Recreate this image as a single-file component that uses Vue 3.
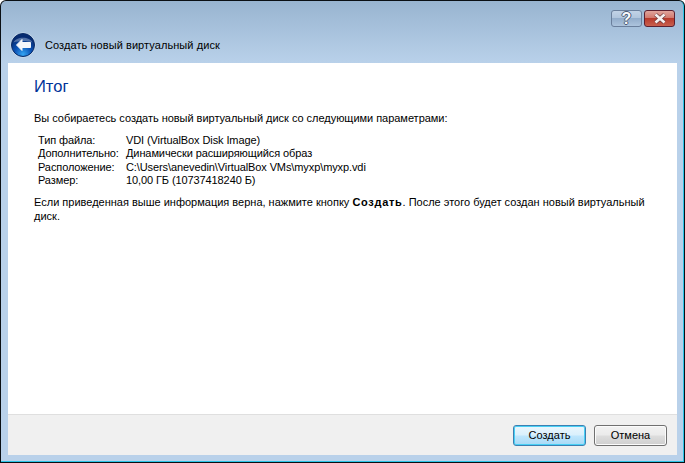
<script setup>
const rows = [
  ['Тип файла:', 'VDI (VirtualBox Disk Image)'],
  ['Дополнительно:', 'Динамически расширяющийся образ'],
  ['Расположение:', 'C:\\Users\\anevedin\\VirtualBox VMs\\myxp\\myxp.vdi'],
  ['Размер:', '10,00 ГБ (10737418240 Б)'],
]
</script>

<template>
  <div class="window">
    <div class="frame">
      <div class="caption">
        <button class="cap help">?</button>
        <button class="cap close">
          <svg width="14" height="11" viewBox="0 0 14 11"><path d="M2.5 1.5L11.5 9.5M11.5 1.5L2.5 9.5" stroke="#6b3a3c" stroke-width="4" /><path d="M2.5 1.5L11.5 9.5M11.5 1.5L2.5 9.5" stroke="#f6f0f0" stroke-width="2.6" /></svg>
        </button>
      </div>
      <div class="nav">
        <svg class="back" width="26" height="26" viewBox="0 0 26 26">
          <defs>
            <radialGradient id="g" cx="50%" cy="90%" r="75%">
              <stop offset="0" stop-color="#35a5f2" />
              <stop offset="0.5" stop-color="#0b52b5" />
              <stop offset="1" stop-color="#062a70" />
            </radialGradient>
          </defs>
          <circle cx="13" cy="13" r="12.5" fill="#dbe7f3" opacity="0.75" />
          <circle cx="13" cy="13" r="11.5" fill="url(#g)" stroke="#0a2b66" />
          <path d="M3.5 10.5C6 4 20 4 22.5 10.5C17 8.5 9 8.5 3.5 10.5Z" fill="#fff" opacity="0.3" />
          <path d="M6.5 13L12 7.5V10.5H20.5V15.5H12V18.5Z" fill="#f4f6fa" stroke="#f4f6fa" stroke-width="1" stroke-linejoin="round" />
        </svg>
        <span class="nav-title">Создать новый виртуальный диск</span>
      </div>
      <div class="sheet">
        <div class="body">
          <h1>Итог</h1>
          <p class="intro">Вы собираетесь создать новый виртуальный диск со следующими параметрами:</p>
          <div class="grid">
            <template v-for="r in rows" :key="r[0]">
              <span>{{ r[0] }}</span><span>{{ r[1] }}</span>
            </template>
          </div>
          <p class="note">Если приведенная выше информация верна, нажмите кнопку <b>Создать</b>. После этого будет создан новый виртуальный диск.</p>
        </div>
        <div class="footer">
          <button class="btn primary">Создать</button>
          <button class="btn">Отмена</button>
        </div>
      </div>
    </div>
  </div>
</template>

<style>
html, body { margin: 0; padding: 0; background: #fff; }
</style>

<style scoped>
.window {
  width: 685px;
  height: 463px;
  box-sizing: border-box;
  background: #0a0f14;
  border-radius: 6px 6px 0 0;
  padding: 1px 1px 0 1px;
  font-family: "Liberation Sans", sans-serif;
  font-size: 11px;
  color: #000;
  overflow: hidden;
}
.frame {
  height: 461px;
  box-sizing: border-box;
  padding: 0 6px 6px 7px;
  border-radius: 5px 5px 0 0;
  border-bottom: 1px solid #2cc4e6;
  border-right: 1px solid #2cc4e6;
  background: linear-gradient(to bottom, #98b4d0 0, #b9d1ea 62px);
  display: flex;
  flex-direction: column;
}
.caption {
  height: 17px;
  padding-top: 9px;
  display: flex;
  justify-content: flex-end;
  gap: 2px;
  padding-right: 2px;
}
.cap {
  width: 31px;
  height: 17px;
  padding: 0;
  box-sizing: border-box;
  border-radius: 3px;
  display: flex;
  align-items: center;
  justify-content: center;
  font: bold 16px "Liberation Sans", sans-serif;
}
.help {
  border: 1px solid #6a7f9c;
  background: linear-gradient(to bottom, #c2d3e7 0, #afc4dc 50%, #93adcb 50%, #adc4dd 100%);
  color: #f8f9fb;
  text-shadow: 1px 0 0 #4c5c74, -1px 0 0 #4c5c74, 0 1px 0 #4c5c74, 0 -1px 0 #4c5c74;
}
.close {
  border: 1px solid #5c2030;
  background: linear-gradient(to bottom, #e0a49c 0, #d0756a 50%, #b83a2c 50%, #c9604e 100%);
}
.nav {
  height: 36px;
  display: flex;
  align-items: center;
  gap: 9px;
  padding-left: 2px;
}
.nav-title { letter-spacing: 0.07px; }
.back { flex: none; }
.sheet {
  flex: 1;
  min-height: 0;
  display: flex;
  flex-direction: column;
  background: #fff;
}
.body {
  flex: 1;
  padding: 0 26px;
  min-height: 0;
}
h1 {
  margin: 12px 0 0;
  font-size: 16.5px;
  font-weight: 400;
  line-height: 22px;
  color: #003399;
}
.intro { margin: 13px 0 0; line-height: 16px; letter-spacing: -0.03px; }
.grid {
  margin: 8px 0 0 4px;
  display: grid;
  grid-template-columns: 88px 1fr;
  line-height: 13.33px;
  letter-spacing: -0.1px;
}
.note { margin: 8px 0 0; line-height: 14px; }
.note b { letter-spacing: 0.7px; }
.footer {
  height: 40px;
  flex: none;
  background: #f0f0f0;
  border-top: 1px solid #dfdfdf;
  display: flex;
  justify-content: flex-end;
  align-items: center;
  gap: 8px;
  padding-right: 10px;
}
.btn {
  width: 73px;
  height: 21px;
  padding: 0;
  box-sizing: border-box;
  font: inherit;
  color: #000;
  border: 1px solid #707070;
  border-radius: 3px;
  background: linear-gradient(to bottom, #f2f2f2 0, #ebebeb 48%, #dddddd 52%, #cfcfcf 100%);
  box-shadow: inset 0 0 0 1px #fbfbfb;
}
.primary {
  border-color: #3c7fb1;
  background: linear-gradient(to bottom, #eaf6fd 0, #d9f0fc 48%, #bee6fd 52%, #a7d9f5 100%);
  box-shadow: inset 0 0 0 1px #48d0f5;
}
</style>
